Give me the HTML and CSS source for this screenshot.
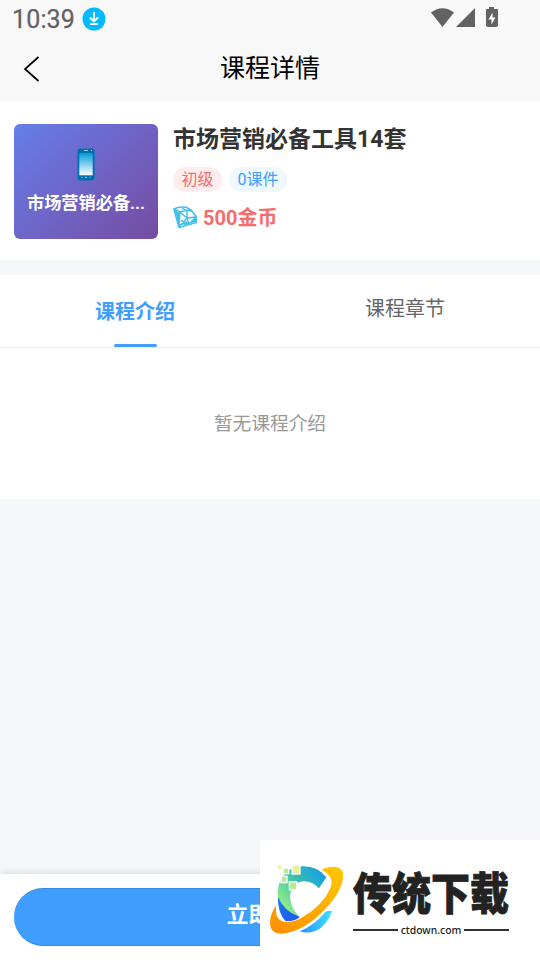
FILE: index.html
```
<!DOCTYPE html>
<html lang="zh-CN">
<head>
<meta charset="utf-8">
<title>课程详情</title>
<link rel="stylesheet" href="styles.css">
</head>
<body>
<div class="app">
  <header class="top">
    <div class="status">
      <span class="time">10:39</span>
      <svg class="download" viewBox="0 0 24 24"><circle cx="12" cy="12" r="11.5" fill="#00bbff"/><path d="M12 5v9M8 10.5l4 4 4-4M8 17h8" fill="none" stroke="#fff" stroke-width="1.9"/></svg>
      <svg class="signals" viewBox="0 0 70 24"><g fill="#626262"><path d="M0 5.500Q11.500-3 23 5.500L11.500 20Z"/><path d="M44 1V20H25Z"/><path d="M58 0h5v2h3q1 0 1 1v15q0 2-2 2H57q-2 0-2-2V3q0-1 1-1h2Z"/></g><path d="M61.500 5.500l-4 7h3v5l4-7h-3Z" fill="#fff"/></svg>
    </div>
    <div class="navbar">
      <svg class="back" viewBox="0 0 20 28"><path d="M15.500 2L2 14 15.500 26" fill="none" stroke="#000" stroke-width="1.700"/></svg>
      <h1>课程详情</h1>
    </div>
  </header>

  <section class="course">
    <div class="cover">
      <svg class="phone" viewBox="0 0 18 33"><defs><linearGradient id="screen" x2="0" y2="1"><stop stop-color="#039bd7"/><stop offset="1" stop-color="#fff"/></linearGradient></defs><rect x=".5" y=".5" width="17" height="32" rx="3" fill="#006fae"/><rect x="2.300" y="5" width="13.400" height="22.300" fill="url(#screen)"/><path d="M7 2.500h4M14 2.500h1M4.500 29.300h1M8 29.300h2M12.500 29.300h1" stroke="#a9cbdc"/></svg>
      <div class="cover-title">市场营销必备...</div>
    </div>
    <div class="info">
      <h2>市场营销必备工具14套</h2>
      <div class="tags"><span class="tag level">初级</span><span class="tag count">0课件</span></div>
      <div class="price">
        <svg viewBox="0 0 24 24"><path d="M.8 3L5 1.500Q9 .5 13 1.200L18 4 23.200 10.500V16.500L6 21.500Z" fill="#fff" stroke="#3fbfea" stroke-width="1.500" stroke-linejoin="round"/><path d="M1 3L7 6 14 4 19 5M7 6L6 21M7 6L14 12 23 11M14 4V12L6 21M14 12L16 18M23 11L16 18M8 14l5 5M2 5l4 3M9 2l5 3" fill="none" stroke="#3fbfea" stroke-width="1.400"/><path d="M2 5L7 7 6 20ZM7 19l6-4 3 3ZM16 17l7-5v4Z" fill="#3fbfea"/></svg>
        <span>500金币</span>
      </div>
    </div>
  </section>

  <section class="detail">
    <nav class="tabs"><div class="tab active">课程介绍</div><div class="tab">课程章节</div></nav>
    <div class="empty">暂无课程介绍</div>
  </section>

  <footer class="buybar"><button class="buy">立即购买</button></footer>

  <aside class="watermark">
    <svg class="emblem" viewBox="0 0 300 360">
      <defs>
        <linearGradient id="cyan" gradientUnits="userSpaceOnUse" x1="70" y1="190" x2="195" y2="95"><stop stop-color="#8ce98a"/><stop offset=".5" stop-color="#36bdb2"/><stop offset="1" stop-color="#139ce8"/></linearGradient>
        <linearGradient id="gold" x1="1" y1="0" x2="0" y2="1"><stop stop-color="#ffc800"/><stop offset="1" stop-color="#ff8d00"/></linearGradient>
        <linearGradient id="blue" x2="1" y2="1"><stop stop-color="#187bef"/><stop offset="1" stop-color="#2454f4"/></linearGradient>
        <linearGradient id="sky" x1="0" x2="1"><stop stop-color="#278fff"/><stop offset="1" stop-color="#3de3ff"/></linearGradient>
      </defs>
      <path d="M54 172C49 115 84 79 128 79Q173 78 199 112L177 145Q155 122 130 124C102 127 88 148 91 178Q95 210 119 230L100 244H80Q56 215 54 172Z" fill="url(#cyan)"/>
      <path d="M54 170Q70 212 119 231L104 245H78Q52 218 54 170Z" fill="url(#blue)"/>
      <path d="M119 274Q163 257 198 214L216 212Q202 256 168 272 143 282 119 274Z" fill="url(#sky)"/>
      <path d="M184 89Q240 68 249 99 254 145 196 207 132 275 67 281 31 283 30 250 30 222 49 196 43 235 65 243 92 253 130 230 188 197 211 145 225 108 184 89Z" fill="url(#gold)" stroke="#fff" stroke-width="5" paint-order="stroke"/>
      <g stroke="#fff" stroke-width="4"><rect x="96" y="76" width="24" height="26" fill="#e5f39b"/><rect x="70" y="84" width="16" height="17" fill="#bcea92"/><rect x="63" y="109" width="18" height="19" fill="#b5ed94"/><rect x="88" y="125" width="22" height="24" fill="#b5ee90"/><rect x="51" y="75" width="15" height="15" fill="#e9f4a9"/></g>
    </svg>
    <div class="brand"><div class="brand-name">传统下载</div><div class="domain">ctdown.com</div></div>
  </aside>
</div>
</body>
</html>
```
FILE: styles.css
```
* { box-sizing: border-box; }
body { margin: 0; font-family: Roboto, "Noto Sans CJK SC", sans-serif; background: #f5f7fb; }
.app { position: relative; height: 960px; display: flex; flex-direction: column; overflow: hidden; }
.top { height: 102px; background: #f8f8f8; }
.status { height: 38px; display: flex; align-items: center; padding: 0 39px 0 12px; color: #626262; }
.time { font-size: 25px; line-height: 38px; letter-spacing: .15px; padding-top: 2px; -webkit-text-stroke: .25px #626262; }
.download { width: 24px; height: 24px; margin-left: 7px; margin-top: -1px; }
.signals { width: 70px; height: 24px; margin: -1px 0 0 auto; }
.navbar { height: 64px; display: grid; grid-template-columns: 60px 1fr 60px; }
.back { width: 20px; height: 28px; margin: 17px 0 0 23px; }
h1 { margin: 0; text-align: center; font-size: 25px; font-weight: 400; line-height: 62px; color: #000; }
.course { height: 158px; background: #fff; display: flex; gap: 15px; padding: 22px 14px; }
.cover { width: 144px; height: 115px; border-radius: 6px; background: linear-gradient(135deg, #667eea, #764ba2); display: flex; flex-direction: column; align-items: center; padding-top: 24px; color: #fff; }
.phone { width: 18px; height: 33px; }
.cover-title { margin-top: 9px; font-size: 17.200px; font-weight: 700; line-height: 26px; white-space: nowrap; }
h2 { margin: 0; color: #333; font-size: 23px; font-weight: 700; line-height: 32px; }
.tags { display: flex; gap: 7px; margin-top: 11px; }
.tag { height: 25px; padding: 0 8.500px; border-radius: 13px; font-size: 16px; line-height: 25px; }
.level { background: #ffeded; color: #f56c6c; }
.count { background: #eff8ff; color: #409eff; }
.price { display: flex; align-items: center; gap: 6px; margin-top: 11px; height: 30px; color: #f56c6c; font-size: 20px; font-weight: 700; }
.price span { margin-top: -3px; }
.price svg { width: 24px; height: 24px; }
.detail { margin-top: 15px; height: 224px; background: #fff; }
.tabs { height: 73px; display: flex; border-bottom: 1px solid #ebedf0; }
.tab { flex: 1; display: flex; flex-direction: column; align-items: center; font-size: 20px; line-height: 30px; padding-top: 19px; color: #666; }
.active { color: #409eff; font-weight: 700; padding-top: 22px; }
.active::after { content: ""; width: 43px; height: 3px; border-radius: 2px; background: #409eff; margin-top: 17px; }
.empty { text-align: center; color: #999; font-size: 18.700px; line-height: 152px; }
.buybar { margin-top: auto; height: 86px; padding: 14px; background: #fff; box-shadow: 0 -2px 7px rgba(0,0,0,.1); }
.buy { display: block; width: 100%; height: 58px; border: 1px solid #388be0; border-width: 1px 0; border-radius: 29px; background: #409eff; color: #fff; font: 700 21.600px/52px Roboto, "Noto Sans CJK SC", sans-serif; padding: 0 0 4px; }
.watermark { position: absolute; left: 260px; top: 840px; width: 280px; height: 120px; background: #fff; display: flex; }
.emblem { width: 100px; height: 120px; flex: none; }
.brand { width: 156px; margin-left: -7px; padding-top: 29px; color: #222; }
.brand-name { height: 42px; font: 900 39px/42px "Noto Sans CJK SC", sans-serif; white-space: nowrap; transform: scaleY(1.15); -webkit-text-stroke: .7px #222; }
.domain { display: flex; align-items: center; gap: 3px; margin-top: 11px; height: 16px; font: 500 10.400px/16px "Noto Sans", sans-serif; }
.domain::before, .domain::after { content: ""; flex: 1; height: 2px; background: #332f2f; }
```
